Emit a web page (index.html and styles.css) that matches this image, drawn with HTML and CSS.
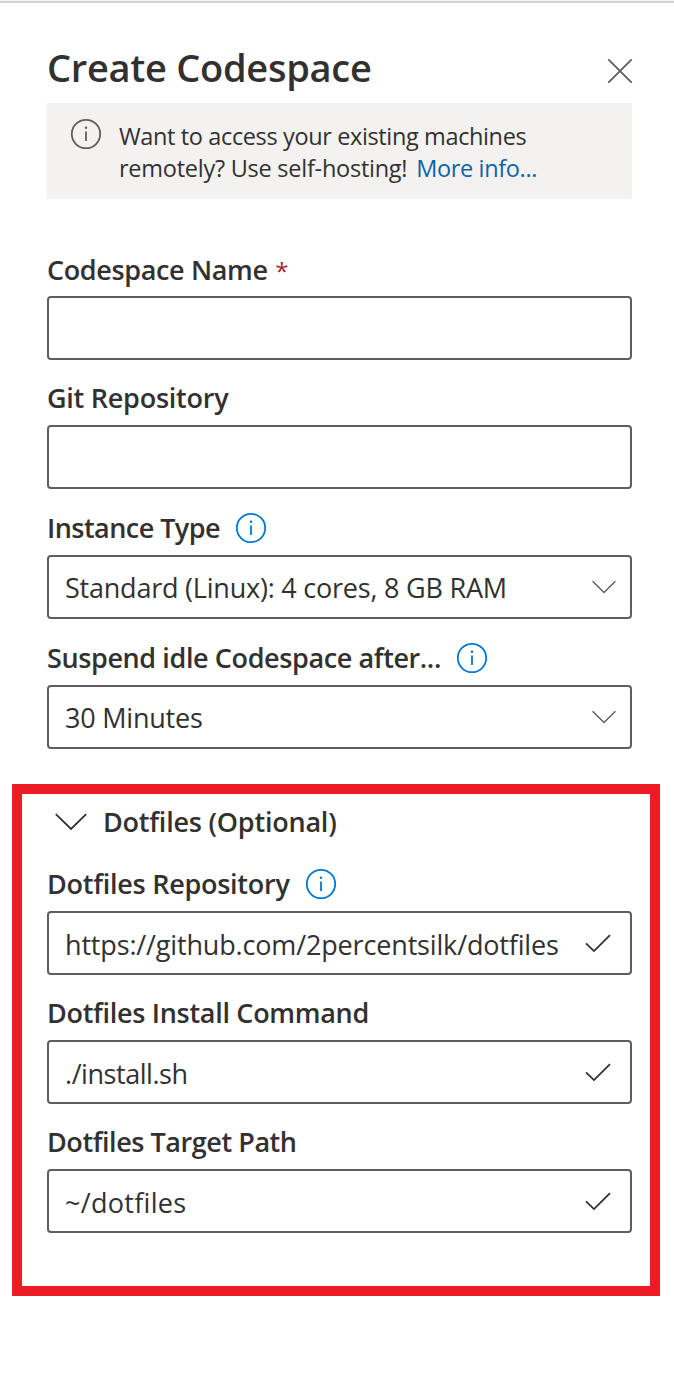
FILE: index.html
```html
<!DOCTYPE html>
<html lang="en">
<head>
<meta charset="utf-8">
<title>Create Codespace</title>
<link rel="stylesheet" href="styles.css">
</head>
<body>
<svg class="defs" width="0" height="0" aria-hidden="true">
  <symbol id="info" viewBox="0 0 32 32">
    <circle cx="16" cy="16" r="14.2" fill="none" stroke="currentColor" stroke-width="1.8"/>
    <path d="M16 13.4V23" fill="none" stroke="currentColor" stroke-width="1.8"/>
    <circle cx="16" cy="9.7" r="1.2" fill="currentColor"/>
  </symbol>
  <symbol id="chevron" viewBox="0 0 24 14">
    <path d="M.6 1.2 12 12.4 23.4 1.2" fill="none" stroke="currentColor" stroke-width="1.4"/>
  </symbol>
  <symbol id="check" viewBox="0 0 26 20">
    <path d="M1 10.3 9 18.1 25 2.1" fill="none" stroke="currentColor" stroke-width="1.8"/>
  </symbol>
</svg>
<main class="panel">
  <header class="header">
    <h1 class="title"><span class="t-title">Create Codespace</span></h1>
    <svg class="close" viewBox="0 0 26 26"><path d="M1.3 1.3l23.4 23.4M24.7 1.3 1.3 24.7" fill="none" stroke="currentColor" stroke-width="1.8"/></svg>
  </header>
  <section class="notice">
    <svg class="icon-info icon-grey"><use href="#info"/></svg>
    <p class="notice-text"><span class="t-n1">Want to access your existing machines</span><br><span class="t-n2">remotely? Use self-hosting! <a class="link">More info...</a></span></p>
  </section>
  <form class="form">
    <div class="field">
      <label class="label"><span class="t-name">Codespace Name <span class="required">*</span></span></label>
      <div class="control"></div>
    </div>
    <div class="field">
      <label class="label"><span class="t-git">Git Repository</span></label>
      <div class="control"></div>
    </div>
    <div class="field field-select">
      <label class="label"><span class="t-type">Instance Type</span><svg class="icon-info"><use href="#info"/></svg></label>
      <div class="control"><span class="t-std">Standard (Linux): 4 cores, 8 GB RAM</span><svg class="chevron"><use href="#chevron"/></svg></div>
    </div>
    <div class="field field-select">
      <label class="label"><span class="t-idle">Suspend idle Codespace after...</span><svg class="icon-info"><use href="#info"/></svg></label>
      <div class="control"><span class="t-min">30 Minutes</span><svg class="chevron"><use href="#chevron"/></svg></div>
    </div>
  </form>
  <section class="dotfiles">
    <h2 class="section-title"><svg class="section-chevron" viewBox="0 0 32 18"><path d="M.8 1.2 16 16 31.2 1.2" fill="none" stroke="currentColor" stroke-width="1.8"/></svg><span class="t-opt">Dotfiles (Optional)</span></h2>
    <div class="field">
      <label class="label"><span class="t-repo">Dotfiles Repository</span><svg class="icon-info"><use href="#info"/></svg></label>
      <div class="control"><span class="t-url">https://github.com/2percentsilk/dotfiles</span><svg class="check"><use href="#check"/></svg></div>
    </div>
    <div class="field">
      <label class="label"><span class="t-cmd">Dotfiles Install Command</span></label>
      <div class="control"><span class="t-sh">./install.sh</span><svg class="check"><use href="#check"/></svg></div>
    </div>
    <div class="field">
      <label class="label"><span class="t-path">Dotfiles Target Path</span></label>
      <div class="control"><span class="t-dot">~/dotfiles</span><svg class="check"><use href="#check"/></svg></div>
    </div>
  </section>
</main>
</body>
</html>
```
FILE: styles.css
```css
* { box-sizing: border-box; }
body {
  margin: 0;
  background: #fff;
  color: #323130;
  font-family: "Open Sans", "Noto Sans", sans-serif;
  font-size: 27px;
}
h1, h2, p { margin: 0; }
svg { display: block; flex: none; }
.defs { position: absolute; }
.panel {
  height: 1398px;
  border-top: 1px solid #f5f5f4;
  box-shadow: inset 0 2px #d2d2d2;
}
.header {
  display: flex;
  justify-content: space-between;
  height: 102px;
  padding: 39px 41px 0 47px;
}
.title { font-size: 38px; font-weight: 600; line-height: 54px; white-space: nowrap; }
.close { width: 26px; height: 26px; margin-top: 18px; color: #605e5c; }
.notice {
  display: flex;
  gap: 17px;
  height: 96px;
  margin: 0 42px 0 47px;
  padding: 17px 0 0 23px;
  background: #f3f2f1;
}
.notice-text { font-size: 23.5px; line-height: 32px; white-space: nowrap; }
.link { margin-left: 3px; color: #0f63a8; letter-spacing: -.35px; }
.icon-info { width: 32px; height: 32px; color: #0078d4; }
.icon-grey { color: #605e5c; margin-top: -2px; }
.form { margin: 52px 42px 0 47px; }
.field { margin-bottom: 20px; }
.field-select { margin-top: 21px; }
.label {
  display: flex;
  align-items: center;
  gap: 15px;
  height: 45px;
  padding-bottom: 10px;
  font-weight: 600;
  line-height: 36px;
  white-space: nowrap;
}
.label .icon-info { margin-top: 1px; }
.required { margin-left: 1px; color: #a4262c; font-size: 24px; font-weight: 400; line-height: 1; }
.control {
  display: flex;
  align-items: center;
  justify-content: space-between;
  height: 64px;
  padding: 0 14px 0 16px;
  border: 2px solid #605e5c;
  border-radius: 4px;
  white-space: nowrap;
}
.chevron { width: 24px; height: 14px; color: #605e5c; }
.check { width: 26px; height: 20px; margin-right: 5px; }
.dotfiles {
  height: 512px;
  margin: 35px 14px 0 12px;
  padding: 10px 18px 0 25px;
  border: 10px solid #ed1c24;
}
.dotfiles .control span { padding-top: 2px; }
.section-title {
  display: flex;
  align-items: center;
  gap: 16px;
  height: 36px;
  margin-bottom: 26px;
  padding-left: 8px;
  font-size: 27px;
  font-weight: 600;
  line-height: 36px;
}
.section-chevron { width: 32px; height: 18px; }

/* Tracking per text run */
.t-title { letter-spacing: -.28px; }
.t-n1 { letter-spacing: -.37px; }
.t-n2 { letter-spacing: -.25px; }
.t-name { padding-top: 2px; letter-spacing: -.36px; }
.t-git { letter-spacing: -.25px; }
.t-type { letter-spacing: -.54px; }
.t-std { letter-spacing: -.22px; }
.t-idle { letter-spacing: -.39px; }
.t-min { letter-spacing: -.22px; }
.t-opt { letter-spacing: -.22px; }
.t-repo { letter-spacing: -.26px; }
.t-url { letter-spacing: -.16px; }
.t-cmd { letter-spacing: -.3px; }
.t-sh { letter-spacing: -.45px; }
.t-path { letter-spacing: -.44px; }
.t-dot { letter-spacing: .3px; }
```
